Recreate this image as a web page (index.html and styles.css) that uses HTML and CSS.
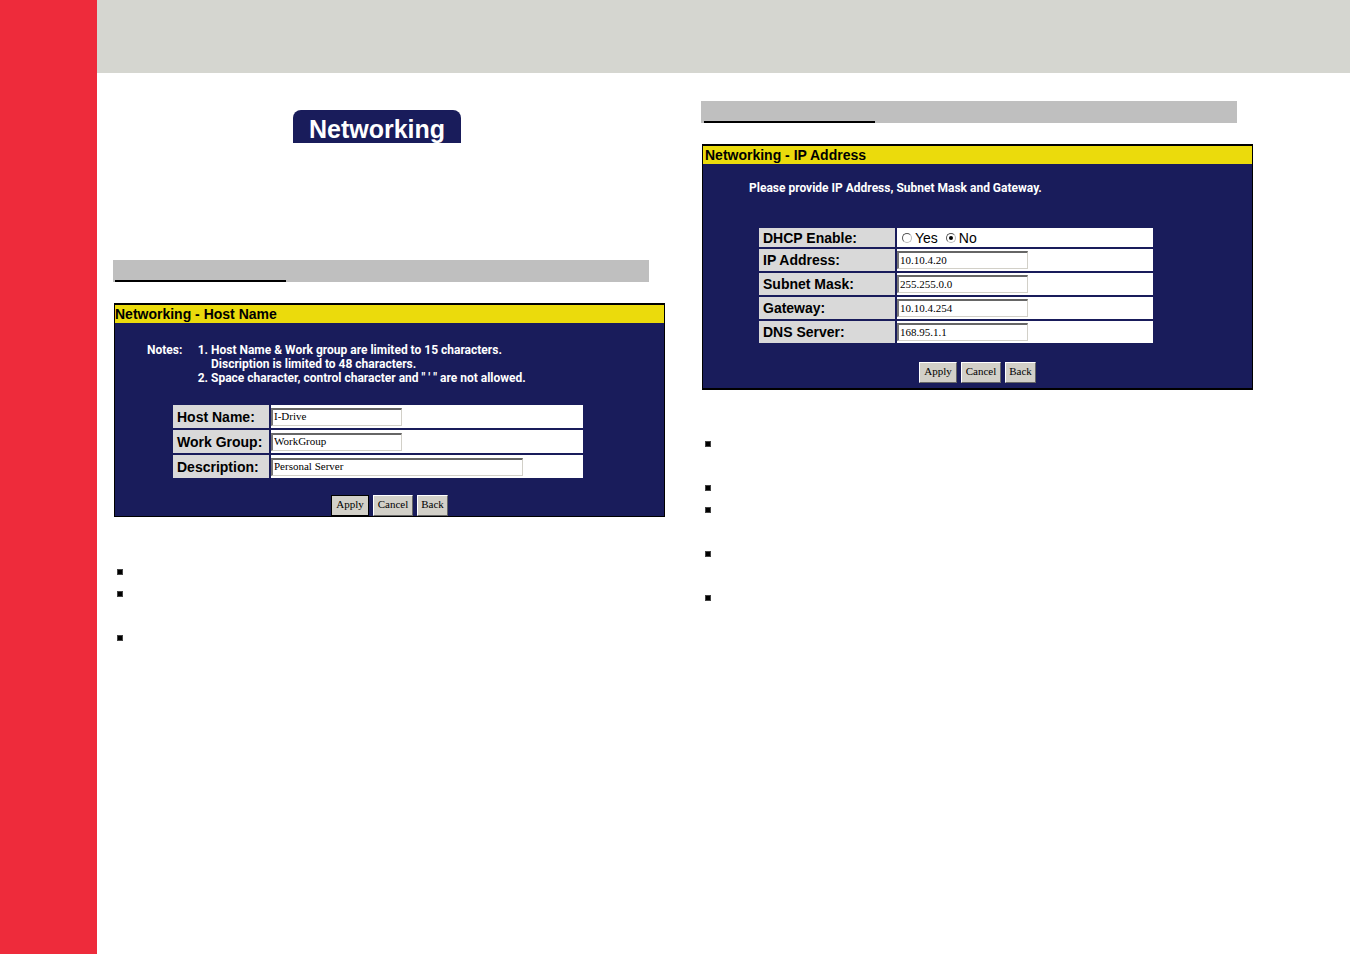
FILE: index.html
```html
<!DOCTYPE html>
<html lang="en">
<head>
<meta charset="utf-8">
<title>Networking</title>
<link rel="stylesheet" href="styles.css">
</head>
<body>
<div class="page">
  <aside class="stripe"></aside>
  <header class="band"></header>
  <main class="columns">
    <section class="column column-host">
      <h1 class="tab">Networking</h1>
      <div class="heading"></div>
      <form class="panel">
        <h2 class="panel-title">Networking - Host Name</h2>
        <div class="notes">
          <span class="notes-label">Notes:</span>
          <ol class="notes-list">
            <li>Host Name &amp; Work group are limited to 15 characters.<br>Discription is limited to 48 characters.</li>
            <li>Space character, control character and " ' " are not allowed.</li>
          </ol>
        </div>
        <div class="fields fields-host">
          <label class="name" for="host">Host Name:</label>
          <div class="value"><input class="text" id="host" type="text" value="I-Drive"></div>
          <label class="name" for="group">Work Group:</label>
          <div class="value"><input class="text" id="group" type="text" value="WorkGroup"></div>
          <label class="name" for="desc">Description:</label>
          <div class="value"><input class="text text-wide" id="desc" type="text" value="Personal Server"></div>
        </div>
        <div class="buttons">
          <button class="button button-apply button-default" type="button">Apply</button>
          <button class="button" type="button">Cancel</button>
          <button class="button button-back" type="button">Back</button>
        </div>
      </form>
      <ul class="bullets">
        <li></li>
        <li class="two-line"></li>
        <li></li>
      </ul>
    </section>
    <section class="column column-ip">
      <div class="heading"></div>
      <form class="panel panel-ip">
        <h2 class="panel-title">Networking - IP Address</h2>
        <p class="prompt">Please provide IP Address, Subnet Mask and Gateway.</p>
        <div class="fields fields-ip">
          <span class="name" id="dhcp">DHCP Enable:</span>
          <div class="value choices" role="radiogroup" aria-labelledby="dhcp">
            <label class="choice"><input class="radio" type="radio" name="dhcp">Yes</label>
            <label class="choice"><input class="radio" type="radio" name="dhcp" checked>No</label>
          </div>
          <label class="name" for="ip">IP Address:</label>
          <div class="value"><input class="text" id="ip" type="text" value="10.10.4.20"></div>
          <label class="name" for="mask">Subnet Mask:</label>
          <div class="value"><input class="text" id="mask" type="text" value="255.255.0.0"></div>
          <label class="name" for="gateway">Gateway:</label>
          <div class="value"><input class="text" id="gateway" type="text" value="10.10.4.254"></div>
          <label class="name" for="dns">DNS Server:</label>
          <div class="value"><input class="text" id="dns" type="text" value="168.95.1.1"></div>
        </div>
        <div class="buttons">
          <button class="button button-apply" type="button">Apply</button>
          <button class="button" type="button">Cancel</button>
          <button class="button button-back" type="button">Back</button>
        </div>
      </form>
      <ul class="bullets">
        <li class="two-line"></li>
        <li></li>
        <li class="two-line"></li>
        <li class="two-line"></li>
        <li></li>
      </ul>
    </section>
  </main>
</div>
</body>
</html>
```
FILE: styles.css
```css
*,
*::before {
  box-sizing: border-box;
}

body {
  margin: 0;
  background: #fff;
  color: #000;
  font-family: "Liberation Sans", Arial, sans-serif;
}

.page {
  display: grid;
  grid-template-columns: 97px 1fr;
  grid-template-rows: 73px 1fr;
  min-height: 100vh;
}

.stripe {
  grid-row: 1 / 3;
  background: #ee2b3b;
}

.band {
  margin-right: 1px;
  background: #d5d6d0;
}

.columns {
  display: grid;
  grid-template-columns: 1fr 1fr;
  gap: 36px;
  padding: 0 98px 0 16px;
}

.column-host {
  padding-top: 37px;
}

.column-ip {
  padding-top: 28px;
}

.tab {
  width: 168px;
  height: 33px;
  margin: 0 0 117px 180px;
  overflow: hidden;
  border-radius: 8px 8px 0 0;
  background: #191c5b;
  color: #fff;
  font-size: 25px;
  line-height: 38px;
  text-align: center;
}

.heading {
  display: flex;
  align-items: flex-end;
  height: 22px;
  margin-right: 16px;
  padding-left: 2px;
  background: #bfbfbf;
}

.column-ip .heading {
  padding-left: 3px;
}

.heading::before {
  content: "";
  width: 171px;
  height: 2px;
  background: #000;
}

.panel {
  margin: 21px 0 0 1px;
  border: 1px solid #000;
  border-top-width: 2px;
  background: #191c5b;
}

.panel-ip {
  border-bottom-width: 2px;
}

.panel-title {
  margin: 0;
  background: #ebdb0c;
  font-size: 14px;
  line-height: 18px;
}

.panel-ip .panel-title {
  padding-left: 2px;
}

.notes,
.prompt {
  color: #fff;
  font-family: Roboto, "Liberation Sans", sans-serif;
  font-size: 12px;
  font-weight: bold;
  line-height: 14px;
}

.notes {
  display: flex;
  margin: 20px 0 0 32px;
}

.notes-label {
  width: 64px;
}

.notes-list {
  margin: 0;
  padding: 0;
}

.prompt {
  margin: 17px 0 0 46px;
}

.fields {
  display: grid;
  gap: 2px;
}

.fields-host {
  grid-template-columns: 96px 1fr;
  grid-auto-rows: 23px;
  margin: 20px 81px 0 58px;
}

.fields-ip {
  grid-template-columns: 136px 1fr;
  grid-template-rows: 19px;
  grid-auto-rows: 22px;
  margin: 33px 99px 0 56px;
}

.name {
  display: flex;
  align-items: center;
  padding: 0 4px;
  background: #d9d9d9;
  font-size: 14px;
  font-weight: bold;
  line-height: 18px;
  white-space: nowrap;
}

.value {
  display: flex;
  align-items: center;
  background: #fff;
}

.text {
  width: 131px;
  height: 18px;
  padding: 0 1px 2px;
  border: 1px solid #d2d0c8;
  border-top: 2px solid #666;
  border-left: 2px solid #777;
  background: #fff;
  color: #000;
  font: 11px "Liberation Serif", "Times New Roman", serif;
}

.text-wide {
  width: 252px;
}

.choices {
  gap: 8px;
  padding-left: 5px;
}

.choice {
  display: flex;
  align-items: center;
  gap: 3px;
  font-size: 14px;
  line-height: 18px;
}

.radio {
  display: grid;
  place-items: center;
  width: 10px;
  height: 10px;
  margin: 0;
  appearance: none;
  border: 1px solid;
  border-color: #555 #bbb #bbb #555;
  border-radius: 50%;
}

.radio:checked::before {
  content: "";
  width: 4px;
  height: 4px;
  border-radius: 50%;
  background: #000;
}

.buttons {
  display: flex;
  justify-content: center;
  gap: 4px;
  margin-top: 17px;
}

.panel-ip .buttons {
  margin: 19px 0 5px;
}

.button {
  width: 40px;
  height: 21px;
  padding: 0 0 3px;
  border: 1px solid;
  border-color: #fff #666 #666 #fff;
  background: #d2d0c8;
  color: #000;
  font: 11px "Liberation Serif", "Times New Roman", serif;
}

.button-apply {
  width: 38px;
}

.button-default {
  border-color: #000;
}

.button-back {
  width: 31px;
}

.bullets {
  margin: 44px 0 0;
  padding: 0 0 0 4px;
  list-style: none;
}

.column-ip .bullets {
  margin-top: 43px;
}

.bullets li {
  height: 22px;
  padding-top: 8px;
}

.bullets .two-line {
  height: 44px;
}

.bullets li::before {
  content: "";
  display: block;
  width: 6px;
  height: 6px;
  border: 1px solid #444;
  background: #000;
}
```
